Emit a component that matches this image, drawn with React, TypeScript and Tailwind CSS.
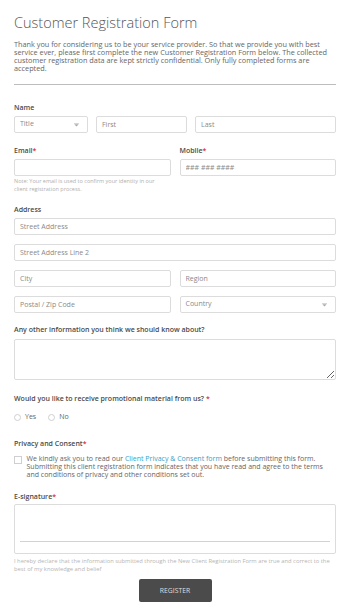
import React from 'react'

const font = { fontFamily: '"Open Sans", "Liberation Sans", sans-serif' }

function Caret() {
  return (
    <svg width="5" height="4" viewBox="0 0 5 4" className="shrink-0">
      <path d="M0 0.5 H5" stroke="#bbb" strokeWidth="0.6" />
      <path d="M0.3 1.3 L4.7 1.3 L2.5 3.6 Z" fill="#aaa" />
    </svg>
  )
}

function Field({ placeholder, className = '' }: { placeholder?: string; className?: string }) {
  return (
    <input
      type="text"
      placeholder={placeholder}
      className={`h-[17px] min-w-0 rounded-[2px] border border-[#dcdcdc] bg-white px-[5px] text-[7px] text-[#555] outline-none placeholder:text-[#8a8a8a] ${className}`}
    />
  )
}

function SelectBox({ label, className = '' }: { label: string; className?: string }) {
  return (
    <div
      className={`flex h-[17px] items-center justify-between rounded-[2px] border border-[#dcdcdc] bg-white pl-[5px] pr-[8px] text-[7px] text-[#8a8a8a] ${className}`}
    >
      <span>{label}</span>
      <Caret />
    </div>
  )
}

function Label({ children, req = false, className = '' }: { children: React.ReactNode; req?: boolean; className?: string }) {
  return (
    <div className={`text-[7px] font-semibold leading-[8px] text-[#4a4a4a] ${className}`}>
      {children}
      {req && <span className="text-[#e0302a]">*</span>}
    </div>
  )
}

function Radio({ label }: { label: string }) {
  return (
    <label className="flex items-center gap-[4px]">
      <span className="h-[7px] w-[7px] rounded-full border border-[#cfcfcf] bg-white" />
      <span className="text-[7px] text-[#666]">{label}</span>
    </label>
  )
}

export default function App() {
  return (
    <div className="min-h-[616px] w-[350px] bg-white" style={font}>
      <div className="flex flex-col px-[14px] pt-[13px]">
        <h1 className="text-[14.5px] font-light leading-[19px] text-[#555]">Customer Registration Form</h1>
        <p className="mt-[8px] text-[7.3px] leading-[8px] text-[#666]">
          Thank you for considering us to be your service provider. So that we provide you with best service ever, please
          first complete the new Customer Registration Form below. The collected customer registration data are kept
          strictly confidential. Only fully completed forms are accepted.
        </p>
        <div className="mt-[12px] h-px bg-[#bdbdbd]" />

        <Label className="mt-[19px]">Name</Label>
        <div className="mt-[4px] flex gap-[8px]">
          <SelectBox label="Title" className="w-[74px]" />
          <Field placeholder="First" className="w-[91px]" />
          <Field placeholder="Last" className="flex-1" />
        </div>

        <div className="mt-[14px] grid grid-cols-2 gap-[9px]">
          <div className="flex flex-col">
            <Label req>Email</Label>
            <Field className="mt-[4px]" />
            <div className="mt-[2px] text-[5.5px] leading-[7.5px] text-[#b0b0b0]">
              Note: Your email is used to confirm your identity in our
              <br />
              client registration process.
            </div>
          </div>
          <div className="flex flex-col">
            <Label req>Mobile</Label>
            <Field placeholder="### ### ####" className="mt-[4px]" />
          </div>
        </div>

        <Label className="mt-[13px]">Address</Label>
        <div className="mt-[4px] flex flex-col gap-[9px]">
          <Field placeholder="Street Address" />
          <Field placeholder="Street Address Line 2" />
          <div className="grid grid-cols-2 gap-[9px]">
            <Field placeholder="City" />
            <Field placeholder="Region" />
          </div>
          <div className="grid grid-cols-2 gap-[9px]">
            <Field placeholder="Postal / Zip Code" />
            <SelectBox label="Country" />
          </div>
        </div>

        <Label className="mt-[13px]">Any other information you think we should know about?</Label>
        <textarea className="mt-[5px] h-[41px] rounded-[2px] border border-[#dcdcdc] bg-white outline-none" />

        <Label req className="mt-[15px]">
          Would you like to receive promotional material from us?{' '}
        </Label>
        <div className="mt-[9px] flex gap-[12px]">
          <Radio label="Yes" />
          <Radio label="No" />
        </div>

        <Label req className="mt-[17px]">
          Privacy and Consent
        </Label>
        <div className="mt-[7.5px] flex gap-[5px]">
          <span className="mt-[1px] h-[7.5px] w-[7.5px] shrink-0 border border-[#cfcfcf] bg-white" />
          <p className="text-[7px] leading-[8px] text-[#666]">
            We kindly ask you to read our <span className="text-[#36a3c9]">Client Privacy &amp; Consent form</span> before
            submitting this form. Submitting this client registration form indicates that you have read and agree to the
            terms and conditions of privacy and other conditions set out.
          </p>
        </div>

        <Label req className="mt-[14px]">
          E-signature
        </Label>
        <div className="mt-[3px] flex h-[50px] flex-col justify-end rounded-[2px] border border-[#dcdcdc] bg-white px-[5px] pb-[11px]">
          <div className="h-[1.5px] bg-[#d2d2d2]" />
        </div>
        <p className="mt-[4px] text-[5.8px] leading-[7.7px] text-[#b5b5b5]">
          I hereby declare that the information submitted through the New Client Registration Form are true and correct to
          the best of my knowledge and belief
        </p>

        <div className="mt-[6px] flex justify-center">
          <button className="flex h-[23px] w-[73px] items-center justify-center rounded-[2px] bg-[#4b4b4b] text-[6.8px] text-[#dedede]">
            REGISTER
          </button>
        </div>
      </div>
    </div>
  )
}
